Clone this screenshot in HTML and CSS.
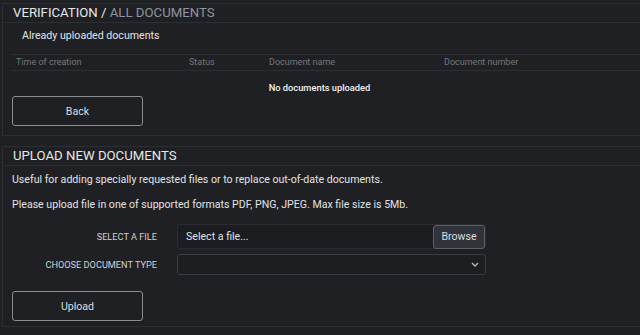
FILE: index.html
```html
<!DOCTYPE html>
<html lang="en">
<head>
    <meta charset="UTF-8">
    <meta name="viewport" content="width=device-width, initial-scale=1.0">
    <title>Verification / All documents</title>
    <link rel="stylesheet" href="styles.css">
</head>
<body>
    <section class="panel">
        <h1 class="panel-head">Verification / <span class="muted-title">All documents</span></h1>
        <div class="subtitle">Already uploaded documents</div>
        <div class="doc-table">
            <div class="doc-row doc-head">
                <div>Time of creation</div>
                <div>Status</div>
                <div>Document name</div>
                <div>Document number</div>
            </div>
            <div class="doc-empty">No documents uploaded</div>
        </div>
        <div class="actions">
            <button class="btn" type="button">Back</button>
        </div>
    </section>

    <section class="panel panel-upload">
        <h2 class="panel-head">Upload new documents</h2>
        <p class="note first">Useful for adding specially requested files or to replace out-of-date documents.</p>
        <p class="note">Please upload file in one of supported formats PDF, PNG, JPEG. Max file size is 5Mb.</p>
        <form id="uploadForm">
            <div class="form-row">
                <label for="file">Select a file</label>
                <div class="file-field">
                    <span class="file-name">Select a file...</span>
                    <span class="browse">Browse</span>
                </div>
            </div>
            <div class="form-row row-type">
                <label for="doctype">Choose document type</label>
                <div class="select-field" id="doctype">
                    <svg class="chevron" width="8" height="5" viewBox="0 0 8 5">
                        <path d="M1 1l3 3 3-3" fill="none" stroke="#b5b7bb" stroke-width="1.4"/>
                    </svg>
                </div>
            </div>
            <div class="actions upload-actions">
                <button class="btn" type="submit">Upload</button>
            </div>
        </form>
    </section>
</body>
</html>
```

FILE: styles.css
```css
body {
    margin: 0;
    padding: 3px 0 0 2px;
    background-color: #1f2023;
    color: #e2e3e5;
    font-family: Roboto, "Liberation Sans", Arial, sans-serif;
    overflow: hidden;
}
.panel {
    border: 1px solid #2c2e32;
    border-right: none;
    padding-bottom: 9px;
}
.panel-upload {
    margin-top: 10px;
    padding-bottom: 5px;
}
.panel-head {
    margin: 0;
    height: 18px;
    line-height: 18px;
    padding: 0 10px;
    font-size: 13.2px;
    font-weight: 400;
    text-transform: uppercase;
    color: #e6e7e9;
    border-bottom: 1px solid #2c2e32;
}
.muted-title {
    color: #8d96a0;
}
.subtitle {
    margin: 6px 0 0 19px;
    font-size: 10.6px;
    line-height: 14px;
}
.doc-table {
    margin: 11px 0 0 8px;
    border-top: 1px solid #2c2e32;
    font-size: 9px;
}
.doc-row {
    display: grid;
    grid-template-columns: 173px 80px 175px 1fr;
    border-bottom: 1px solid #2c2e32;
}
.doc-row div {
    padding: 0 5px;
    line-height: 15px;
    color: #73777c;
}
.doc-empty {
    padding: 11px 12px 0 0;
    text-align: center;
    font-size: 9.3px;
    font-weight: 500;
    line-height: 12px;
    color: #f2f2f2;
}
.actions {
    padding-left: 9px;
    margin-top: 2px;
}
.btn {
    width: 131px;
    height: 30px;
    background: transparent;
    border: 1px solid #8b8d91;
    border-radius: 3px;
    color: #dcdde0;
    font-family: inherit;
    font-size: 10.6px;
}
.note {
    margin: 11px 0 0 9px;
    font-size: 10.6px;
    line-height: 14px;
}
.note.first {
    margin-top: 7px;
}
#uploadForm {
    margin-top: 12px;
}
.form-row {
    display: grid;
    grid-template-columns: 154px 309px;
    column-gap: 20px;
    align-items: center;
}
.form-row label {
    text-align: right;
    font-size: 9.2px;
    text-transform: uppercase;
    color: #cfd0d3;
}
.row-type {
    margin-top: 5px;
}
.file-field {
    display: flex;
    align-items: center;
    height: 25px;
    box-sizing: border-box;
    border: 1px solid #2a2c30;
    border-radius: 3px;
    background: #1c1d20;
}
.file-name {
    flex: 1;
    padding-left: 8px;
    font-size: 10.6px;
    color: #e0e1e3;
}
.browse {
    width: 52px;
    height: 24px;
    line-height: 22px;
    box-sizing: border-box;
    text-align: center;
    background: #30343a;
    border: 1px solid #5b5f66;
    border-radius: 3px;
    font-size: 10.6px;
    color: #dcdde0;
}
.select-field {
    height: 21px;
    box-sizing: border-box;
    border: 1px solid #3a3c42;
    border-radius: 3px;
    background: #1d1e21;
    display: flex;
    align-items: center;
    justify-content: flex-end;
    padding-right: 6px;
}
.upload-actions {
    margin-top: 16px;
}
```
